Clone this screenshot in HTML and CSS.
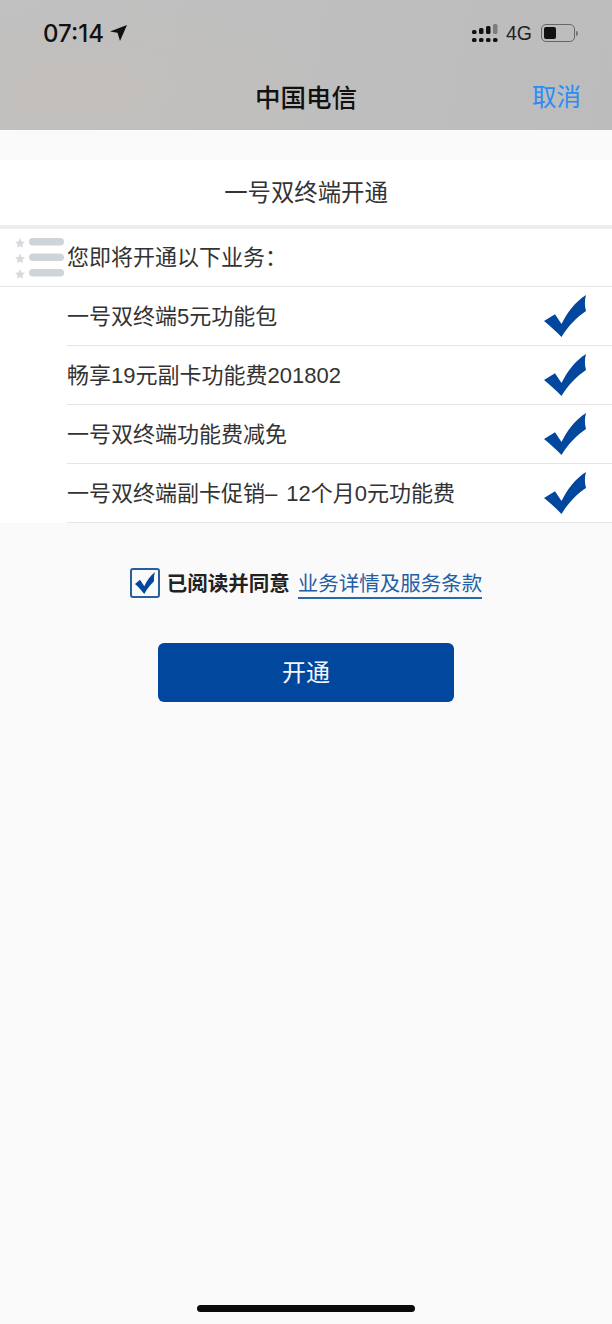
FILE: index.html
```html
<!DOCTYPE html>
<html>
	<head>
		<meta charset="UTF-8">
		<title>一号双终端开通</title>
		<link rel="stylesheet" href="styles.css">
	</head>
	<body>
		<div class="page">
			<header class="top">
				<div class="status">
					<div class="status-left">
						<span class="time">07:14</span>
						<svg class="arrow" width="17" height="16" viewBox="0 0 17 16"><path d="M0 6.500L17 0L10 16L7.500 7.800Z" fill="#111"/></svg>
					</div>
					<div class="status-right">
						<svg class="signal" width="26" height="18" viewBox="0 0 26 18">
							<g fill="#111">
								<rect x="0" y="6" width="4.500" height="4" rx="1.500"/>
								<rect x="0" y="14" width="4.500" height="4" rx="1.500"/>
								<rect x="7" y="4" width="4.500" height="6" rx="1.500"/>
								<rect x="7" y="14" width="4.500" height="4" rx="1.500"/>
								<rect x="14" y="2" width="4.500" height="8" rx="1.500"/>
								<rect x="14" y="14" width="4.500" height="4" rx="1.500"/>
								<rect x="21" y="14" width="4.500" height="4" rx="1.500"/>
							</g>
							<rect x="21" y="0" width="4.500" height="10" rx="1.500" fill="#7d7d7d"/>
						</svg>
						<span class="net">4G</span>
						<div class="battery"><i class="battery-level"></i></div>
						<i class="battery-nub"></i>
					</div>
				</div>
				<nav class="nav">
					<span class="nav-side"></span>
					<h1 class="nav-title">中国电信</h1>
					<a class="nav-side cancel">取消</a>
				</nav>
			</header>

			<main class="content">
				<h2 class="card-title">一号双终端开通</h2>
				<section class="list">
					<svg class="deco" width="50" height="42" viewBox="0 0 50 42">
						<g fill="#d6dade">
							<path d="M5 0L6.500 3.400L10 3.800L7.400 6.200L8.100 9.800L5 8L1.900 9.800L2.600 6.200L0 3.800L3.500 3.400Z"/>
							<path d="M5 15.500L6.500 18.900L10 19.300L7.400 21.700L8.100 25.300L5 23.500L1.900 25.300L2.600 21.700L0 19.300L3.500 18.900Z"/>
							<path d="M5 31L6.500 34.400L10 34.800L7.400 37.200L8.100 40.800L5 39L1.900 40.800L2.600 37.200L0 34.800L3.500 34.400Z"/>
						</g>
						<g fill="#cfd4d9">
							<rect x="14" y="0" width="35" height="7.500" rx="3.750"/>
							<rect x="14" y="15.500" width="35" height="7.500" rx="3.750"/>
							<rect x="14" y="31" width="35" height="7.500" rx="3.750"/>
						</g>
					</svg>
					<div class="row row-head"><span>您即将开通以下业务：</span></div>
					<div class="row">
						<span>一号双终端5元功能包</span>
						<svg class="tick" width="42" height="42" viewBox="0 0 42 42"><path d="M0 26L11 19.300L17.500 29C23 18 31 7 42 0C40.500 5 40.500 11 42 16C33 22 24 31 17.500 42C12 36 6 31 0 26Z" fill="#00479d"/></svg>
					</div>
					<div class="row">
						<span>畅享19元副卡功能费201802</span>
						<svg class="tick" width="42" height="42" viewBox="0 0 42 42"><path d="M0 26L11 19.300L17.500 29C23 18 31 7 42 0C40.500 5 40.500 11 42 16C33 22 24 31 17.500 42C12 36 6 31 0 26Z" fill="#00479d"/></svg>
					</div>
					<div class="row">
						<span>一号双终端功能费减免</span>
						<svg class="tick" width="42" height="42" viewBox="0 0 42 42"><path d="M0 26L11 19.300L17.500 29C23 18 31 7 42 0C40.500 5 40.500 11 42 16C33 22 24 31 17.500 42C12 36 6 31 0 26Z" fill="#00479d"/></svg>
					</div>
					<div class="row">
						<span class="row-wide">一号双终端副卡促销– 12个月0元功能费</span>
						<svg class="tick" width="42" height="42" viewBox="0 0 42 42"><path d="M0 26L11 19.300L17.500 29C23 18 31 7 42 0C40.500 5 40.500 11 42 16C33 22 24 31 17.500 42C12 36 6 31 0 26Z" fill="#00479d"/></svg>
					</div>
				</section>

				<div class="agree">
					<span class="checkbox">
						<svg width="20" height="22" viewBox="0 0 20 22"><path d="M0 12L5 7.700L9.300 14.300C11.500 9 15 4 20 0C19 3 18.800 6 19 9.300C15.500 12.500 12 17 9.300 22C6.500 18.500 3.500 15 0 12Z" fill="#00479d"/></svg>
					</span>
					<div class="agree-words">
						<span class="agree-text">已阅读并同意</span>
						<a class="agree-link">业务详情及服务条款</a>
					</div>
				</div>

				<button class="open-btn">开通</button>
			</main>

			<div class="home-bar"></div>
		</div>
	</body>
</html>
```
FILE: styles.css
```css
html, body {
	margin: 0;
	padding: 0;
}
body {
	background: #fafafa;
	color: #333;
	font-family: "Liberation Sans", "Noto Sans CJK SC", sans-serif;
}
.page {
	height: 1324px;
	display: flex;
	flex-direction: column;
	overflow: hidden;
}

/* top bar */
.top {
	height: 130px;
	flex: none;
	background: radial-gradient(ellipse 240px 90px at 90px 90px, #c3bfbc, rgba(195, 191, 188, 0)), linear-gradient(100deg, #c1c1c1, #bcbcbc);
}
.status {
	height: 66px;
	padding: 0 34px 0 43px;
	display: flex;
	justify-content: space-between;
	align-items: center;
}
.status-left {
	display: flex;
	align-items: center;
	gap: 6px;
}
.time {
	font-family: "Inter", sans-serif;
	font-size: 24px;
	font-weight: 500;
	color: #111;
}
.status-right {
	display: flex;
	align-items: center;
}
.net {
	margin: 0 9px 0 8px;
	font-size: 19.500px;
	color: #222;
}
.battery {
	width: 28px;
	height: 12px;
	padding: 2px;
	border: 1px solid #666;
	border-radius: 5px;
	display: flex;
}
.battery-level {
	width: 12px;
	background: #111;
	border-radius: 2px;
}
.battery-nub {
	width: 2px;
	height: 5px;
	margin-left: 1px;
	background: #777;
	border-radius: 0 2px 2px 0;
}
.nav {
	height: 58px;
	padding: 0 32px 6px;
	display: flex;
	justify-content: space-between;
	align-items: center;
}
.nav-side {
	width: 48px;
}
.nav-title {
	margin: 0;
	font-size: 25.500px;
	font-weight: 500;
	color: #111;
}
.cancel {
	font-size: 24.500px;
	white-space: nowrap;
	color: #2b8cf6;
}

/* card */
.content {
	flex: 1;
	padding-top: 30px;
	display: flex;
	flex-direction: column;
	align-items: center;
}
.card-title {
	width: 100%;
	height: 65px;
	margin: 0;
	background: #fff;
	border-bottom: 4px solid #eee;
	font-size: 23.400px;
	font-weight: 400;
	line-height: 66px;
	text-align: center;
}
.list {
	position: relative;
	width: 100%;
	background: #fff;
}
.deco {
	position: absolute;
	left: 15px;
	top: 9px;
}
.row {
	height: 58px;
	margin-left: 67px;
	padding-right: 26px;
	border-bottom: 1px solid #e6e6e6;
	display: flex;
	justify-content: space-between;
	align-items: center;
	font-size: 22px;
}
.row > span {
	padding-bottom: 4px;
}
.row-wide {
	word-spacing: 3px;
}
.row-head {
	height: 57px;
	margin-left: 0;
	padding-left: 67px;
}
.row-head > span {
	padding-bottom: 6px;
}

/* agree + button */
.agree {
	height: 30px;
	margin-top: 45px;
	display: flex;
	align-items: center;
}
.checkbox {
	width: 26px;
	height: 26px;
	margin-right: 7px;
	border: 2px solid #2a5f9e;
	border-radius: 3px;
	display: flex;
	justify-content: center;
	align-items: center;
}
.agree-words {
	display: flex;
	align-items: baseline;
}
.agree-text {
	font-size: 20.500px;
	font-weight: 700;
	color: #222;
}
.agree-link {
	margin-left: 8px;
	border-bottom: 2px solid #2a68ac;
	font-size: 20.500px;
	line-height: 27px;
	color: #245fa6;
}
.open-btn {
	width: 296px;
	height: 59px;
	margin-top: 45px;
	padding-bottom: 6px;
	border: 0;
	border-radius: 6px;
	background: #00479d;
	color: #f2f5fa;
	font-family: inherit;
	font-size: 24px;
}
.home-bar {
	flex: none;
	width: 218px;
	height: 7px;
	margin: 0 auto 12px;
	background: #0a0a0a;
	border-radius: 4px;
}
```
